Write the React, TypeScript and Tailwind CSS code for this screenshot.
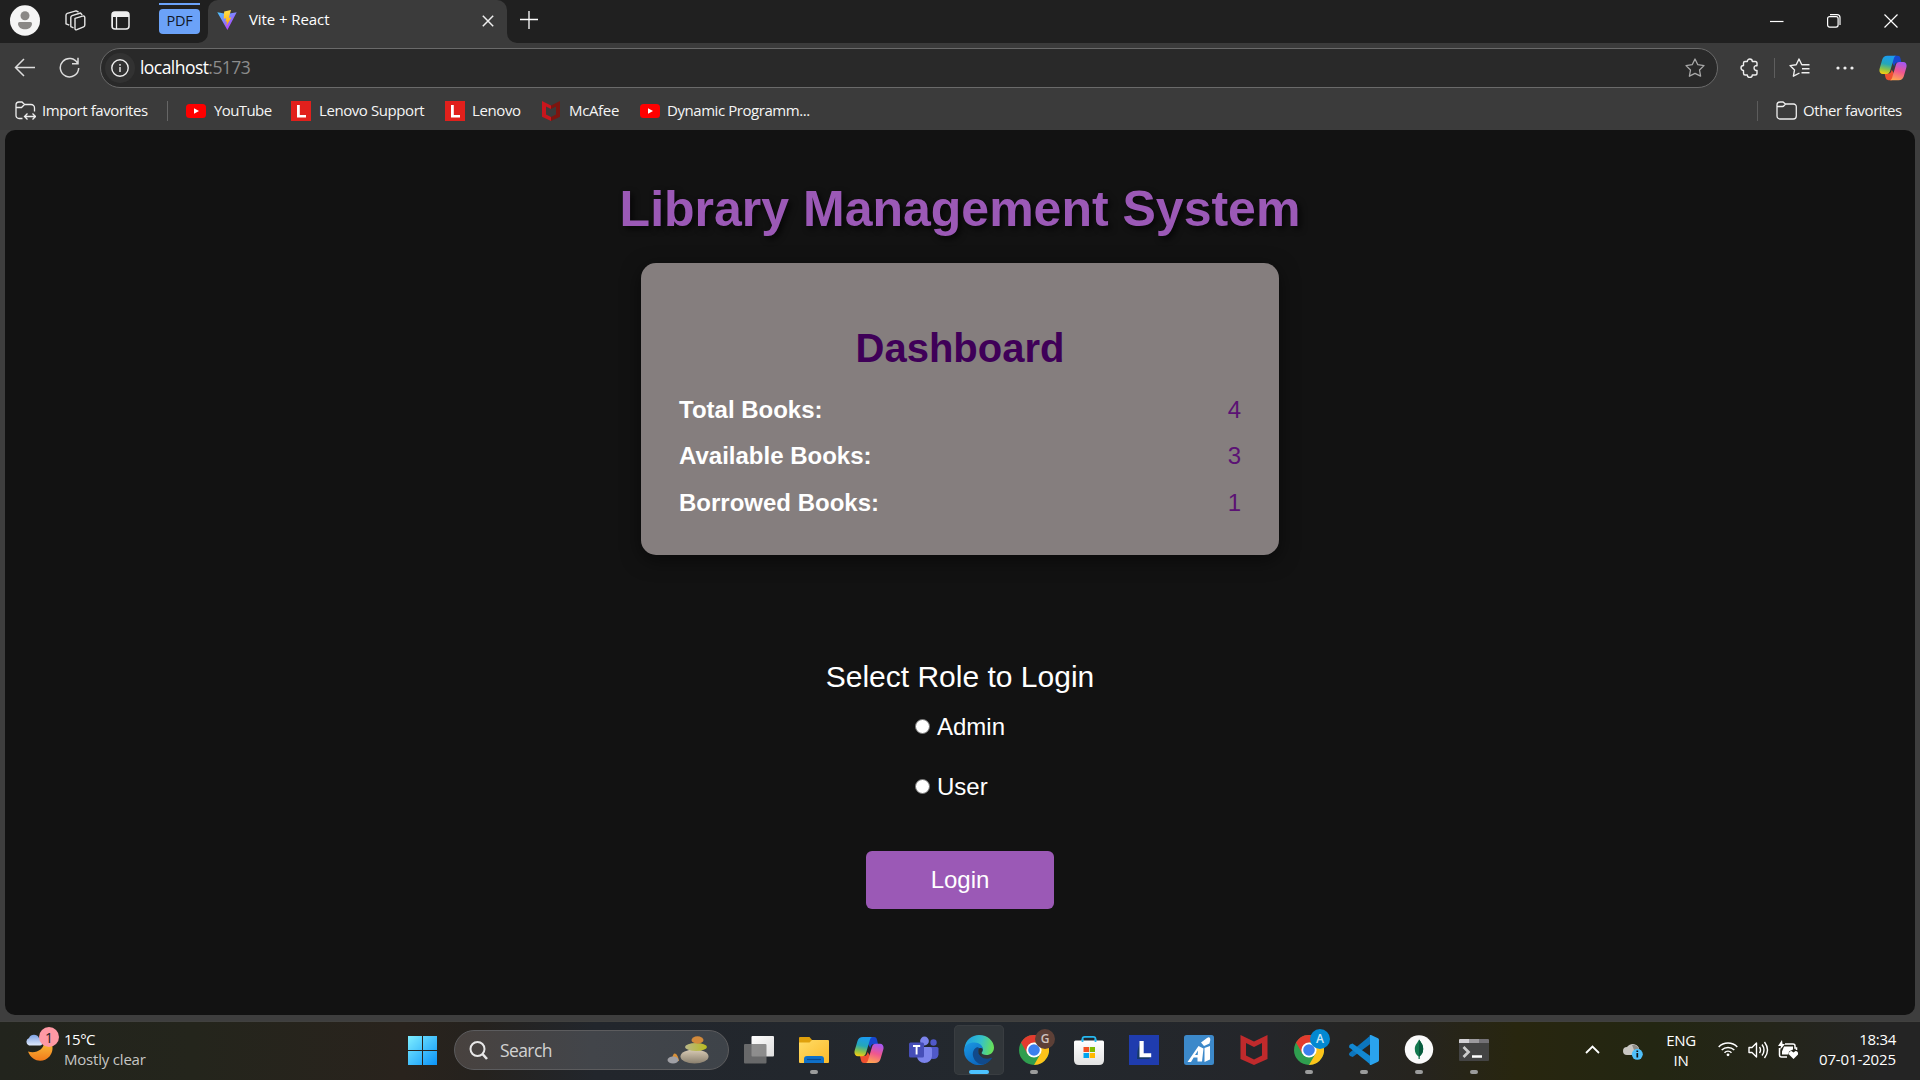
import React from "react";

const ui = "font-['Open_Sans','Noto_Sans',sans-serif]";

function Copilot({ id, size }: { id: string; size: number }) {
  return (
    <svg width={size} height={size} viewBox="0 0 30 30" fill="none" className="shrink-0">
      <defs>
        <linearGradient id={id + "a"} x1="9" y1="2" x2="5" y2="21" gradientUnits="userSpaceOnUse">
          <stop stopColor="#1b9bf0" /><stop offset=".45" stopColor="#25a7b8" /><stop offset=".75" stopColor="#8ac34a" /><stop offset="1" stopColor="#f4cc13" />
        </linearGradient>
        <linearGradient id={id + "b"} x1="24" y1="9" x2="18" y2="28" gradientUnits="userSpaceOnUse">
          <stop stopColor="#a657f0" /><stop offset=".5" stopColor="#f0568f" /><stop offset="1" stopColor="#ffa552" />
        </linearGradient>
      </defs>
      <path d="M16 2h4c2 0 2.600 1.300 3.100 3l.9 4h-4c-2.400 0-3 1.500-3.700 4L14 9z" fill="#1747cf" />
      <path d="M14 28h-4c-2 0-2.600-1.300-3.100-3L6 21h4c2.400 0 3-1.500 3.700-4L16 21z" fill="#ee5030" />
      <path d="M9 2h9.500c-1.500 0-2.200 1.500-2.700 3.200L12 18c-.7 2.200-1.700 3.300-3.800 3.300H4C1 21.300-.1 18.500.7 15.500L3.500 6C4.300 3.400 6 2 9 2z" fill={`url(#${id}a)`} />
      <path d="M21 28h-9.500c1.500 0 2.200-1.500 2.700-3.200L18 12c.7-2.200 1.700-3.300 3.800-3.300H26c3 0 4.100 2.800 3.300 5.800L26.500 24C25.700 26.600 24 28 21 28z" fill={`url(#${id}b)`} />
    </svg>
  );
}

function YouTube() {
  return (
    <svg width="20" height="20" viewBox="0 0 20 20" className="shrink-0">
      <rect y="3" width="20" height="14" rx="3.500" fill="#f00" /><path d="M8 7.200 13 10l-5 2.800z" fill="#fff" />
    </svg>
  );
}

function LenovoFavicon() {
  return (
    <svg width="20" height="20" viewBox="0 0 20 20" className="shrink-0">
      <rect width="20" height="20" fill="#e1201c" /><path d="M6 4h2.800v10H15v2.500H6z" fill="#fff" />
    </svg>
  );
}

function Folder({ sync = false }: { sync?: boolean }) {
  return (
    <svg width="21" height="20" viewBox="0 0 21 20" fill="none" stroke="#eee" strokeWidth="1.300" className="shrink-0">
      {sync ? (
        <>
          <path d="M7.500 17.500H4a3 3 0 0 1-3-3V4a3 3 0 0 1 3-3h3l2.500 2.500H16a3.500 3.500 0 0 1 3.500 3.500v3.500M1 6.500h5.500l3-3" />
          <path d="M10 15.500h10M12.500 12.500l-3 3 3 3M17.500 12.500l3 3-3 3" />
        </>
      ) : (
        <path d="M1 4a3 3 0 0 1 3-3h3l2.500 2h8A2.800 2.800 0 0 1 20.300 6v9a3 3 0 0 1-3 3H4a3 3 0 0 1-3-3zM1 5.500h5.500c1 0 1.500-.5 3-2.500" />
      )}
    </svg>
  );
}

function TabStrip() {
  return (
    <header className="flex h-[43px] shrink-0 bg-[#202020] text-[15px] text-white">
      <div className="flex w-[208px] items-start">
        <svg width="30" height="31" viewBox="0 0 30 31" className="mt-[5px] ml-[10px] shrink-0">
          <ellipse cx="15" cy="15.500" rx="15" ry="15.300" fill="#f5f5f5" /><circle cx="15" cy="10.800" r="4.500" fill="#8a8886" />
          <path d="M8 18.500q0-1.500 1.500-1.500h11q1.500 0 1.500 1.500c0 4-3.500 5.800-7 5.800s-7-1.800-7-5.800z" fill="#8a8886" />
        </svg>
        <svg width="21" height="21" viewBox="0 0 21 21" fill="none" stroke="#e6e6e6" strokeWidth="1.400" strokeLinejoin="round" className="mt-[10px] ml-[25px] shrink-0">
          <path d="m10 8.300 7.500-2.200q2-.5 2.300 1.400v7.600q0 1.200-1.200 1.700l-6.700 2.900q-1.900.6-1.900-1.300z" />
          <path d="M8.500 17.800 5.800 16.600V7.500q0-1.300 1.300-1.800L15.500 3l1.700 2M4.300 15.200 1 13.800V5.200q0-1.300 1.300-1.800L11 .8 13.500 2" />
        </svg>
        <svg width="19" height="19" viewBox="0 0 19 19" className="mt-[11px] ml-[25px] shrink-0">
          <rect x="1" y="1" width="17" height="17" rx="3" fill="none" stroke="#eee" strokeWidth="1.500" /><path d="M1 3q0-2 2-2h13q2 0 2 2v3H1zM1 6h1v11H1z" fill="#eee" /><path d="M5.500 6v12" stroke="#eee" strokeWidth="1.300" />
        </svg>
        <div className="mt-[3px] ml-[29px] flex w-[41px] flex-col gap-1">
          <div className="h-[2px] bg-[#6ba2f8]" />
          <div className={`flex h-[25px] items-center justify-center rounded-[4px] bg-[#6ba2f8] pb-[1px] text-[14.500px] tracking-[-0.300px] text-[#111827] ${ui}`}>PDF</div>
        </div>
      </div>
      <div className="relative flex h-[43px] w-[299px] items-start rounded-t-[10px] bg-[#3b3b3b]">
        <svg width="10" height="10" viewBox="0 0 10 10" className="absolute bottom-0 -left-[10px]"><path d="M10 0v10H0A10 10 0 0 0 10 0" fill="#3b3b3b" /></svg>
        <svg width="10" height="10" viewBox="0 0 10 10" className="absolute -right-[10px] bottom-0"><path d="M0 0v10h10A10 10 0 0 1 0 0" fill="#3b3b3b" /></svg>
        <svg width="20" height="20" viewBox="0 0 20 20" className="mt-[10px] ml-[9px] shrink-0">
          <defs>
            <linearGradient id="vite-v" x1="0" y1="1" x2="12" y2="18" gradientUnits="userSpaceOnUse"><stop stopColor="#41d1ff" /><stop offset="1" stopColor="#b048fe" /></linearGradient>
            <linearGradient id="vite-z" x1="9" y1="1" x2="12" y2="15" gradientUnits="userSpaceOnUse"><stop stopColor="#ffdf4a" /><stop offset="1" stopColor="#ffa800" /></linearGradient>
          </defs>
          <path d="m.3 2.300 9.700 1.700 9.700-1.700L10.400 20z" fill="url(#vite-v)" /><path d="m14 0-6.800 1.400-.5 7.300 2.500-.4-.7 3.500 1.600-.4-.9 4.600 5.300-8.600-2.700.4z" fill="url(#vite-z)" />
        </svg>
        <span className={`mt-[7px] ml-[12px] w-[219px] leading-6 tracking-[-0.080px] ${ui}`}>Vite + React</span>
        <svg width="12" height="12" viewBox="0 0 12 12" stroke="#eee" strokeWidth="1.500" className="mt-[15px] ml-[14px]"><path d="m.8.800 10.400 10.400M11.200.8.800 11.200" /></svg>
      </div>
      <svg width="18" height="18" viewBox="0 0 18 18" stroke="#fff" strokeWidth="1.300" className="mt-[11px] ml-[13px]"><path d="M9 0v18M0 8.500h18" /></svg>
      <div className="mt-[14px] mr-[22px] ml-auto flex gap-[43px]">
        <svg width="14" height="14" viewBox="0 0 14 14" stroke="#fff" strokeWidth="1.200"><path d="M0 7.500h13.500" /></svg>
        <svg width="14" height="14" viewBox="0 0 14 14" fill="none" stroke="#fff" strokeWidth="1.200"><rect x=".6" y="2.600" width="10.500" height="10.500" rx="2" /><path d="M3 .6h7q3 0 3 3V11" /></svg>
        <svg width="14" height="14" viewBox="0 0 14 14" stroke="#fff" strokeWidth="1.200"><path d="m.5.500 13 13M13.500.5l-13 13" /></svg>
      </div>
    </header>
  );
}

const starPath = "m10 1 2.800 5.700 6.200.9-4.500 4.400 1.100 6.200-5.600-2.900-5.600 2.900L5.500 12 1 7.600l6.200-.9z";

function AddressBar() {
  return (
    <div className="flex h-[49px] shrink-0 items-center bg-[#3b3b3b]">
      <svg width="21" height="19" viewBox="0 0 21 19" fill="none" stroke="#ddd" strokeWidth="1.500" className="ml-[14px] shrink-0"><path d="M10 1 1.500 9.500 10 18M1.500 9.500H21" /></svg>
      <svg width="21" height="21" viewBox="0 0 21 21" fill="none" stroke="#ddd" strokeWidth="1.500" className="ml-[24px] shrink-0"><path d="M18.700 6.500A9.200 9.200 0 1 0 19.700 11M19 .8V6.700h-6" /></svg>
      <div className="ml-[20px] flex h-[40px] w-[1618px] items-center rounded-full border border-[#6a6a6a] bg-[#292929]">
        <div className="ml-[4px] flex size-[30px] items-center justify-center rounded-full bg-[#323232]">
          <svg width="18" height="18" viewBox="0 0 18 18" fill="none" stroke="#eee" strokeWidth="1.400"><circle cx="9" cy="9" r="8.200" /><path d="M9 8v5M9 5v1.700" /></svg>
        </div>
        <span className={`mb-[2px] ml-[5px] text-[17.500px] leading-6 tracking-[-0.550px] text-white ${ui}`}>localhost<span className="text-[#8c8c8c]">:5173</span></span>
        <svg width="20" height="20" viewBox="0 0 20 20" fill="none" stroke="#a8a8a8" strokeWidth="1.300" strokeLinejoin="round" className="mr-[12px] ml-auto"><path d={starPath} /></svg>
      </div>
      <svg width="19" height="20" viewBox="0 0 19 20" fill="none" stroke="#eee" strokeWidth="1.400" strokeLinejoin="round" className="ml-[22px]">
        <path d="M4.500 3.500h2.800a2.500 2.500 0 0 1 5 0h2.900q1.800 0 1.800 1.800v2.400h-1.200a2.500 2.500 0 0 0 0 4.800H17v2.700q0 1.800-1.800 1.800h-2.900a2.500 2.500 0 0 1-5 0H5.200q-1.700 0-1.700-1.800v-2.700a2.500 2.500 0 0 1 0-5V5q0-1.500 1.500-1.500" />
      </svg>
      <div className="ml-[15px] h-[20px] w-px bg-[#5e5e5e]" />
      <svg width="21" height="20" viewBox="0 0 21 20" fill="none" stroke="#eee" strokeWidth="1.400" strokeLinejoin="round" className="ml-[14px]">
        <path d="M12.800 6.700 10 1 7.200 6.700 1 7.600 5.500 12l-1.100 6.200L10.500 15M12.500 6.700h8M13 10.700h7.500M12.500 14.700h8" />
      </svg>
      <svg width="18" height="4" viewBox="0 0 18 4" fill="#eee" className="ml-[26px]"><circle cx="2" cy="2" r="1.600" /><circle cx="9" cy="2" r="1.600" /><circle cx="16" cy="2" r="1.600" /></svg>
      <div className="ml-[25px]"><Copilot id="bar" size={28} /></div>
    </div>
  );
}

function McAfeeSmall() {
  return (
    <svg width="18" height="20" viewBox="0 0 18 20" className="shrink-0">
      <path d="m0 0 9 4.500V8L4 5.500v8l5 2.600V20l-9-4.300z" fill="#c8161d" /><path d="M18 0 9 4.500V8l5-2.500v8l-5 2.600V20l9-4.300z" fill="#7c150f" />
    </svg>
  );
}

function Favorites() {
  return (
    <div className={`flex h-[38px] shrink-0 items-center bg-[#3b3b3b] text-[15px] leading-5 whitespace-nowrap text-[#f5f5f5] ${ui}`}>
      <div className="ml-[15px] flex w-[152px] items-center gap-[6px]"><Folder sync /><span className="mb-[2px] tracking-[-0.420px]">Import favorites</span></div>
      <div className="h-[20px] w-px bg-[#666]" />
      <div className="ml-[18px] flex w-[105px] items-center gap-[8px]"><YouTube /><span className="mb-[2px] tracking-[-0.600px]">YouTube</span></div>
      <div className="flex w-[154px] items-center gap-[8px]"><LenovoFavicon /><span className="mb-[2px] tracking-[-0.420px]">Lenovo Support</span></div>
      <div className="flex w-[97px] items-center gap-[7px]"><LenovoFavicon /><span className="mb-[2px] tracking-[-0.400px]">Lenovo</span></div>
      <div className="flex w-[98px] items-center gap-[9px]"><McAfeeSmall /><span className="mb-[2px] tracking-[-0.350px]">McAfee</span></div>
      <div className="flex items-center gap-[7px]"><YouTube /><span className="mb-[2px] tracking-[-0.440px]">Dynamic Programm...</span></div>
      <div className="ml-auto h-[20px] w-px bg-[#5c5c5c]" />
      <div className="ml-[18px] flex w-[144px] items-center gap-[6px]"><Folder /><span className="mb-[2px] tracking-[-0.440px]">Other favorites</span></div>
    </div>
  );
}

const stats = [
  { label: "Total Books:", value: 4 },
  { label: "Available Books:", value: 3 },
  { label: "Borrowed Books:", value: 1 },
];

function Library() {
  return (
    <div className="h-[891px] shrink-0 bg-[#3e3e3e] px-[5px] pb-[6px]">
      <main className="flex h-full flex-col items-center rounded-[10px] bg-[#121212] pt-[49px] font-['Liberation_Sans',Arial,sans-serif] text-white">
        <h1 className="text-[50px] leading-[60px] font-bold text-[#9b59b6] [text-shadow:3px_3px_6px_rgba(0,0,0,0.7)]">Library Management System</h1>
        <section className="mt-6 h-[292px] w-[638px] rounded-[15px] bg-[#857e7e] px-[38px] pt-[61px] shadow-[0_5px_19px_rgba(0,0,0,0.5)]">
          <h2 className="text-center text-[40px] leading-[48px] font-bold text-[#3f0058]">Dashboard</h2>
          <div className="mt-[23.600px] flex flex-col gap-[18.600px] text-[24px] leading-[28px]">
            {stats.map((s) => (
              <div key={s.label} className="flex justify-between"><strong className="font-bold">{s.label}</strong><span className="text-[#5b1274]">{s.value}</span></div>
            ))}
          </div>
        </section>
        <p className="mt-[104px] text-[30px] leading-[36px]">Select Role to Login</p>
        <div className="mt-[18px] flex w-[90px] flex-col gap-[32px] text-[24px] leading-[28px]">
          {["Admin", "User"].map((role) => (
            <label key={role} className="flex items-center gap-[7px]"><span className="mb-[2px] size-[15px] shrink-0 rounded-full border border-[#767676] bg-white" />{role}</label>
          ))}
        </div>
        <button className="mt-[50px] h-[58px] w-[188px] rounded-[6px] bg-[#9b59b6] text-[24px] leading-[28px]">Login</button>
      </main>
    </div>
  );
}

function Chrome({ letter, badge }: { letter: string; badge: "brown" | "blue" }) {
  return (
    <div className="relative">
      <svg width="30" height="30" viewBox="0 0 30 30">
        <circle cx="15" cy="15" r="15" fill="#2f9e4f" />
        <path d="M15 15 2 7.500A15 15 0 0 1 28 7.500H15z" fill="#e33b2e" /><path d="M2 7.500 8.500 18.700 15 15 15 7.500z" fill="#e33b2e" />
        <path d="M15 7.500H28A15 15 0 0 1 15 30l6.500-11.300z" fill="#fdc41a" />
        <circle cx="15" cy="15" r="7.600" fill="#fff" /><circle cx="15" cy="15" r="5.800" fill="#3c80ee" />
      </svg>
      <span className={`absolute -top-[6px] left-[16px] flex size-[20px] items-center justify-center rounded-full text-[12px] font-semibold ${ui} ${badge === "brown" ? "bg-[#5d4037] text-[#d0c4c0]" : "bg-[#0288d1] text-[#cce8f7]"}`}>{letter}</span>
    </div>
  );
}

function Slot({ children, running, active }: { children: React.ReactNode; running?: boolean; active?: boolean }) {
  return (
    <div className={`mr-[5px] flex h-[50px] w-[50px] flex-col items-center rounded-[5px] pt-[10px] ${active ? "bg-[#31363a] ring-1 ring-[#393d41] ring-inset" : ""}`}>
      <div className="flex h-[30px] items-center">{children}</div>
      {running && <div className="mt-[5px] h-[4px] w-[8px] rounded-full bg-[#9b9c9c]" />}
      {active && <div className="mt-[5px] h-[4px] w-[20px] rounded-full bg-[#4cc2ff]" />}
    </div>
  );
}

function Apps() {
  return (
    <div className="ml-[5px] flex pt-[4px]">
      <Slot><svg width="30" height="30" viewBox="0 0 30 30"><defs><linearGradient id="tv" x2="1" y2="1"><stop stopColor="#fff" /><stop offset="1" stopColor="#ddd" /></linearGradient></defs><rect x="7.500" y="1" width="22.500" height="20.500" rx="1" fill="url(#tv)" /><rect y="9" width="22.500" height="19.500" rx="1" fill="#777" fillOpacity=".82" /></svg></Slot>
      <Slot running><svg width="30" height="30" viewBox="0 0 30 30"><defs><linearGradient id="fe" x2="1" y2="1"><stop stopColor="#ffdc66" /><stop offset="1" stopColor="#fbba2a" /></linearGradient></defs><path d="M0 3q0-1 1-1h9.500L13 5v5H0z" fill="#dfa00c" /><path d="M0 7.500h10.500L13 5h16q1 0 1 1v21q0 1-1 1H1q-1 0-1-1z" fill="url(#fe)" /><path d="M5 24q0-3 3-3h14q3 0 3 3v4H5z" fill="#0f70c8" /><path d="M8 24.500h14" stroke="#0a4a90" strokeWidth="1.200" /></svg></Slot>
      <Slot><Copilot id="task" size={30} /></Slot>
      <Slot><svg width="30" height="30" viewBox="0 0 30 30"><circle cx="24.500" cy="7.500" r="3.200" fill="#5059c9" /><path d="M19 12h9q1.500 0 1.500 1.500v6a5.300 5.300 0 0 1-10.500 0z" fill="#5059c9" /><circle cx="15.500" cy="6" r="4.400" fill="#7b83eb" /><path d="M9 12h12q2 0 2 2v7a7.500 7 0 0 1-15 0z" fill="#7b83eb" /><rect y="7.500" width="15" height="15" rx="1.500" fill="#464eb8" /><path d="M4 11h7.200M7.600 11v8.500" stroke="#fff" strokeWidth="1.900" /></svg></Slot>
      <Slot active>
        <svg width="30" height="30" viewBox="0 0 30 30">
          <defs>
            <linearGradient id="eg" x1="4" y1="8" x2="28" y2="14" gradientUnits="userSpaceOnUse"><stop stopColor="#22a6e0" /><stop offset=".5" stopColor="#35c1c9" /><stop offset="1" stopColor="#66df5c" /></linearGradient>
            <linearGradient id="eb" x1="1" y1="10" x2="14" y2="30" gradientUnits="userSpaceOnUse"><stop stopColor="#1a94e0" /><stop offset="1" stopColor="#0b66bd" /></linearGradient>
          </defs>
          <path d="M.5 13C1.500 5 8 0 15 0c9 0 15 6.500 15 12.500 0 5-3.800 7.500-7.500 7.500-3 0-5-1-5-2.200 0-.8 1.200-1.500 1.200-3.500 0-2.500-2.500-5-6.500-5C7 9.300 2 11.500.5 13z" fill="url(#eg)" />
          <path d="M0 15C.5 10 5 7.500 10.500 7.500c5 0 8.300 3 8.300 6.700 0 2-1.200 2.800-1.200 3.600l-3-.3c-2 .5-3 3.500-1 6.500 2.300 3.300 7 4.500 10.500 3A15 15 0 0 1 0 15z" fill="url(#eb)" />
          <path d="M12.500 12.500C9 14.500 8 18.500 9.500 22.500c1.500 4.300 5.500 7 9.500 7 3.500-.8 6.600-2.700 8.800-6 .3-.6-.2-1-.8-.7-3.500 1.700-7.500 1-10-1.300-3-2.500-3.500-5.500-2-8 .3-.8-1.300-1.600-2.500-1z" fill="#114a8b" />
          <path d="M14.500 14c-1 2.500.2 5.500 3 7.500-1-1-1-2.200 0-3.700.5-.7 1.200-1.800 1.200-3.500-.7-1.800-3.400-1.800-4.200-.3z" fill="#2a3034" />
        </svg>
      </Slot>
      <Slot running><Chrome letter="G" badge="brown" /></Slot>
      <Slot><svg width="30" height="30" viewBox="0 0 30 30"><defs><linearGradient id="st" y2="1" x2="0"><stop stopColor="#fff" /><stop offset="1" stopColor="#e2e2e2" /></linearGradient></defs><path d="M8.500 8V4q0-2.200 2.200-2.200h8.600Q21.500 1.800 21.500 4v4" fill="none" stroke="#26b8f0" strokeWidth="1.800" /><path d="M0 7q0-1.500 1.500-1.500h27Q30 5.500 30 7v18q0 5-5 5H5q-5 0-5-5z" fill="url(#st)" /><path d="M8.500 7V4M21.500 7V4" stroke="#26b8f0" strokeWidth="1.800" /><path d="M9.500 12H15v5H9.500z" fill="#f25022" /><path d="M15.700 12H21v5h-5.300z" fill="#7fba00" /><path d="M9.500 18H15v5H9.500z" fill="#00a4ef" /><path d="M15.700 18H21v5h-5.300z" fill="#ffb900" /></svg></Slot>
      <Slot><svg width="30" height="30" viewBox="0 0 30 30"><path d="M0 0h30v30H0z" fill="#1f3cae" /><path d="m11 6-2.500 10-.5 8h12l2-2-9-5z" fill="#173a68" /><path d="M10.500 6h4.200v12.200h7.500v4H10.500z" fill="#fff" /></svg></Slot>
      <Slot><svg width="30" height="30" viewBox="0 0 30 30"><rect width="30" height="30" rx="2.500" fill="#3c89ca" /><path d="M17 7.500 23 3q3.500-2 3.300 2l-.8 3.500-5.500 2.500zM14.500 11l5 2.500-1.500 13h-4.500v-4H9.700L7 27H3.500zM14 15.500 11 20h2.700zM20.500 13l5.500-2v13.500L20.500 27z" fill="#fff" fillRule="evenodd" /></svg></Slot>
      <Slot><svg width="28" height="30" viewBox="0 0 28 30"><path d="m.5 0 13.500 6.500L27.500 0v24L14 30 .5 24zM6 8v12.500l8 4 8-4V8l-8 4z" fill="#c02a2c" fillRule="evenodd" /></svg></Slot>
      <Slot running><Chrome letter="A" badge="blue" /></Slot>
      <Slot running><svg width="30" height="30" viewBox="0 0 30 30"><path d="M22 0v8.500L3.700 22 1 21l-1-1.500.3-1.500z" fill="#0c75bd" /><path d="m1 9.500 2.500-1L22 21.500V30L.3 12.500Q-.3 11 1 9.500z" fill="#1288d2" /><path d="m22 0 7 3.300q1 .5 1 1.700v20q0 1.200-1 1.700L22 30q-1 .3-1.500-.5.500.2.500-1.500V2Q21 .300 20.500.500 21-.2 22 0z" fill="#2aa3ee" /></svg></Slot>
      <Slot running><svg width="30" height="30" viewBox="0 0 30 30"><circle cx="15" cy="14.500" r="14.200" fill="#fafafa" /><path d="M15 4.500c2 3 4.200 5 4.200 9.500 0 4-2 6-3.700 7.500V24h-1v-2.500c-2-1.500-3.700-3.500-3.700-7.500 0-4.500 3.200-6.500 4.200-9.500z" fill="#13784f" /><path d="M15 4.500c2 3 4.200 5 4.200 9.500 0 4-2 6-3.700 7.500V24H15z" fill="#075a3c" /></svg></Slot>
      <Slot running><svg width="30" height="30" viewBox="0 0 30 30"><path d="M0 8h30v17q0 1-1 1H1q-1 0-1-1z" fill="#444" /><path d="M0 5q0-1 1-1h9v4H0z" fill="#d3d1d5" /><path d="M10 4h10v4H10z" fill="#9c9a9e" /><path d="M20 4h9q1 0 1 1v3H20z" fill="#737176" /><path d="m4.500 12 5 5-5 5" fill="none" stroke="#ccc" strokeWidth="2.700" /><path d="M13 21.500h10" stroke="#fff" strokeWidth="2.500" /></svg></Slot>
    </div>
  );
}

function Taskbar() {
  return (
    <footer className={`flex h-[59px] shrink-0 shadow-[inset_0_1px_#41413f] bg-[linear-gradient(90deg,#22241d_0%,#24251c_10%,#29231d_21%,#25221e_25%,#22262c_31%,#23282e_52%,#24262a_66%,#26241e_74%,#28260f_79%,#232612_86%,#242519_92%,#242424_98%)] text-[15px] text-white ${ui}`}>
      <div className="relative ml-[24px] flex w-[384px] shrink-0 pt-[12px]">
        <svg width="30" height="30" viewBox="0 0 30 30"><defs><linearGradient id="moon" x2="0" y2="1"><stop stopColor="#f9bd3a" /><stop offset="1" stopColor="#f27a1a" /></linearGradient><linearGradient id="cloud" x2="0" y2="1"><stop stopColor="#7ea3e4" /><stop offset="1" stopColor="#dfe9fb" /></linearGradient></defs><path d="M27.500 10c2 5 1 10-2 13.500-6 6.500-17 6-21.500-5 8 2.500 16-2 16-9z" fill="url(#moon)" /><path d="M5 12.500a4 4 0 0 1 0-7.500 5.500 5.500 0 0 1 10 0c5 0 5 7.500 1 7.500z" fill="url(#cloud)" /></svg>
        <span className="absolute top-[6px] left-[15px] flex size-[20px] items-center justify-center rounded-full bg-[#ff99a4] text-[14px] text-[#222]">1</span>
        <div className="-mt-[4px] ml-[10px] leading-[20px]"><div className="tracking-[-0.500px]">15°C</div><div className="tracking-[-0.200px] text-[#c6c6c4]">Mostly clear</div></div>
      </div>
      <svg width="29" height="29" viewBox="0 0 29 29" className="mt-[15px] shrink-0"><defs><linearGradient id="win" x1="0" y1="0" x2="29" y2="29" gradientUnits="userSpaceOnUse"><stop stopColor="#7eeeff" /><stop offset="1" stopColor="#0a93f8" /></linearGradient></defs><path d="M0 0h14v14H0zM15 0h14v14H15zM0 15h14v14H0zM15 15h14v14H15z" fill="url(#win)" /></svg>
      <div className="mt-[9px] ml-[17px] flex h-[40px] w-[275px] shrink-0 items-center rounded-full border border-[#5c5c5e] bg-[linear-gradient(90deg,#48423f,#42454a_50%,#3e4349)]">
        <svg width="19" height="19" viewBox="0 0 19 19" fill="none" stroke="#e8e8e8" strokeWidth="2" className="ml-[14px]"><circle cx="8.500" cy="8" r="7" /><path d="m13.500 13 4.500 5" strokeWidth="2.600" /></svg>
        <span className="ml-[12px] text-[17.500px] tracking-[-0.600px] text-[#d2d2d2]">Search</span>
        <svg width="42" height="28" viewBox="0 0 42 28" className="mr-[19px] ml-auto"><defs><linearGradient id="p1" x2="0" y2="1"><stop stopColor="#d8cbb5" /><stop offset="1" stopColor="#8a7f6e" /></linearGradient><linearGradient id="p2" x2="1"><stop stopColor="#b9b78a" /><stop offset="1" stopColor="#b9bb1c" /></linearGradient></defs><path d="M5 23q1-6 3-5.500 3 1 4 7.500H8z" fill="#d89038" /><ellipse cx="6" cy="24" rx="5.500" ry="3.500" fill="#a0a0a5" /><ellipse cx="27.500" cy="20.500" rx="14" ry="7" fill="url(#p1)" /><ellipse cx="29" cy="11" rx="11" ry="4" fill="url(#p2)" /><ellipse cx="30.500" cy="4" rx="6" ry="3.700" fill="#d28a3c" /></svg>
      </div>
      <Apps />
      <div className="mr-[24px] ml-auto flex items-start">
        <svg width="15" height="9" viewBox="0 0 15 9" fill="none" stroke="#fff" strokeWidth="1.800" className="mt-[24px]"><path d="m1 8 6.500-6.500L14 8" /></svg>
        <svg width="20" height="18" viewBox="0 0 20 18" className="mt-[21px] ml-[23px]"><path d="M4 13a4 4 0 0 1 0-8 7 7 0 0 1 12 1v7z" fill="#c8c6c2" /><path d="M9 3a6 6 0 0 1 7 4l2 2-7-1z" fill="#8f8d89" /><circle cx="14.300" cy="12.300" r="5.500" fill="#4fc0fa" /><path d="M14.300 11v4.500M14.300 8.500v1.600" stroke="#111" strokeWidth="1.700" /></svg>
        <div className="mt-[9px] ml-[23px] w-[30px] text-center leading-[20px] tracking-[-0.300px]">ENG<br />IN</div>
        <svg width="20" height="16" viewBox="0 0 20 16" fill="none" stroke="#fff" strokeWidth="1.500" className="mt-[20px] ml-[22px]"><path d="M.7 6a13 13 0 0 1 18.600 0M3.700 9a9 9 0 0 1 12.600 0M6.500 11.700a5 5 0 0 1 7 0" /><circle cx="10" cy="13.800" r="1.400" fill="#fff" stroke="none" /></svg>
        <svg width="21" height="18" viewBox="0 0 21 18" fill="none" stroke="#fff" strokeWidth="1.400" strokeLinejoin="round" className="mt-[20px] ml-[10px]"><path d="M1 6.500h3L8.500 2v14L4 11.500H1zM11.500 6q2 3 0 6M14 3.500q4 5.500 0 11M16.500 1q6 8 0 16" /></svg>
        <svg width="21" height="20" viewBox="0 0 21 20" className="mt-[19px] ml-[9px]"><path d="M7 4h8q2 0 2 2v2h1.500v2M1.500 8v7q0 2 2 2H9" fill="none" stroke="#fff" strokeWidth="1.500" /><path d="M6 6.500h9v3l-4 2-.5 3H4v-3z" fill="#fff" /><path d="M4 0 0 6h3L2 10l5-6H4.500z" fill="#fff" /><path d="M15.500 19 11 14.500q-.5-3.500 2.500-3.500l2 1.500 2-1.500q3 0 2.500 3.500z" fill="#fff" /></svg>
        <div className="mt-[8px] ml-[17px] w-[80px] text-right leading-[20px] whitespace-nowrap"><div className="tracking-[-0.300px]">18:34</div><div className="tracking-[-0.120px]">07-01-2025</div></div>
      </div>
    </footer>
  );
}

export default function App() {
  return (
    <div className="flex h-[1080px] w-[1920px] flex-col overflow-hidden">
      <TabStrip />
      <AddressBar />
      <Favorites />
      <Library />
      <Taskbar />
    </div>
  );
}
